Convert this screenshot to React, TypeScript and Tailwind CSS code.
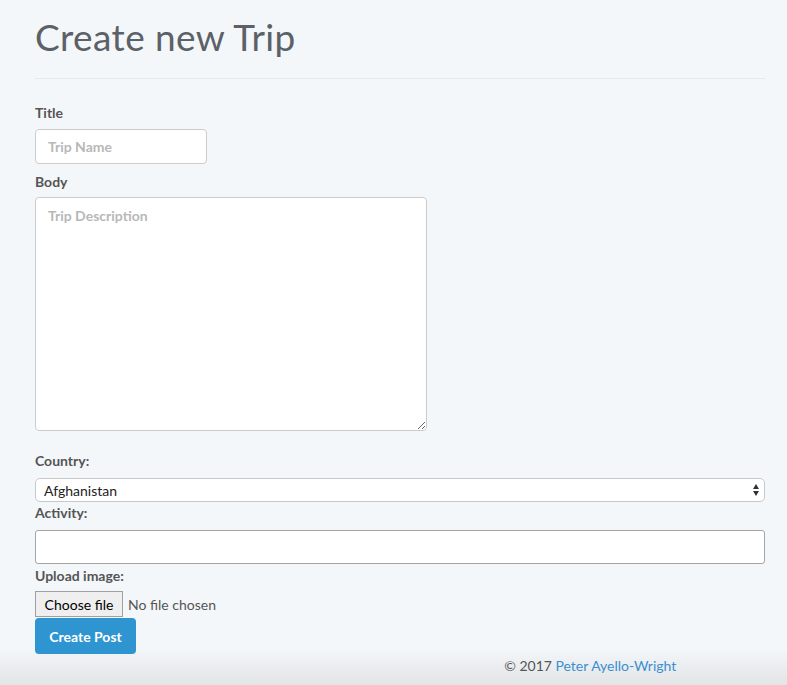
import React from "react";

const font = { fontFamily: "Lato, 'Open Sans', sans-serif" };

function App() {
  return (
    <div
      style={font}
      className="min-h-[685px] w-full bg-[linear-gradient(to_bottom,#f4f7fa_0px,#f4f7fa_648px,#e2e4e6_685px)] text-[#555]"
    >
      <div className="px-[35px]">
        <h1 className="pt-[17px] text-[37px] font-normal leading-[40px] tracking-[0.4px] text-[#5b6166]">
          Create new Trip
        </h1>
        <div className="mt-[21px] h-px w-[730px] bg-[#e6e9ec]" />

        <form className="pt-[24px]">
          <label className="block text-[14px] font-bold leading-[20px]">Title</label>
          <input
            placeholder="Trip Name"
            className="mt-[6px] block h-[35px] w-[172px] rounded-[4px] border border-[#ccc] bg-white px-[12px] text-[14px] font-bold placeholder:text-[#b8b8b8] outline-none"
          />

          <label className="mt-[8px] block text-[14px] font-bold leading-[20px]">Body</label>
          <textarea
            placeholder="Trip Description"
            className="mt-[5px] block h-[234px] w-[392px] resize rounded-[4px] border border-[#ccc] bg-white px-[12px] py-[7px] text-[14px] font-bold placeholder:text-[#b8b8b8] outline-none"
          />

          <label className="mt-[20px] block text-[14px] font-bold leading-[20px]">Country:</label>
          <div className="mt-[7px] flex h-[24px] w-[730px] items-center justify-between rounded-[5px] border border-[#c8c8c8] bg-white pl-[8px] pr-[4px] text-[14px] text-[#222]">
            <span>Afghanistan</span>
            <svg width="8" height="14" viewBox="0 0 8 14">
              <path d="M4 1 L7 6 L1 6 Z" fill="#333" />
              <path d="M4 13 L7 8 L1 8 Z" fill="#333" />
            </svg>
          </div>

          <label className="mt-px block text-[14px] font-bold leading-[20px]">Activity:</label>
          <input className="mt-[7px] block h-[34px] w-[730px] rounded-[3px] border border-[#a5a5a5] bg-white px-[8px] text-[14px] outline-none" />

          <label className="mt-[2px] block text-[14px] font-bold leading-[20px]">Upload image:</label>
          <div className="mt-[5px] flex items-center gap-[5px] text-[14px]">
            <span className="flex h-[26px] w-[88px] items-center justify-center border border-[#a0a0a0] bg-[#efefef] text-black">
              Choose file
            </span>
            <span className="text-[#555]">No file chosen</span>
          </div>

          <button
            type="button"
            className="mt-px block h-[36px] w-[101px] rounded-[4px] bg-[#2e95d0] text-[14px] font-bold text-white"
          >
            Create Post
          </button>
        </form>
      </div>

      <footer className="grid grid-cols-2 pt-[2px]">
        <div />
        <p className="text-center text-[14px] leading-[20px] text-[#555]">
          © 2017 <span className="text-[#3a8fd0]">Peter Ayello-Wright</span>
        </p>
      </footer>
    </div>
  );
}

export default App;
